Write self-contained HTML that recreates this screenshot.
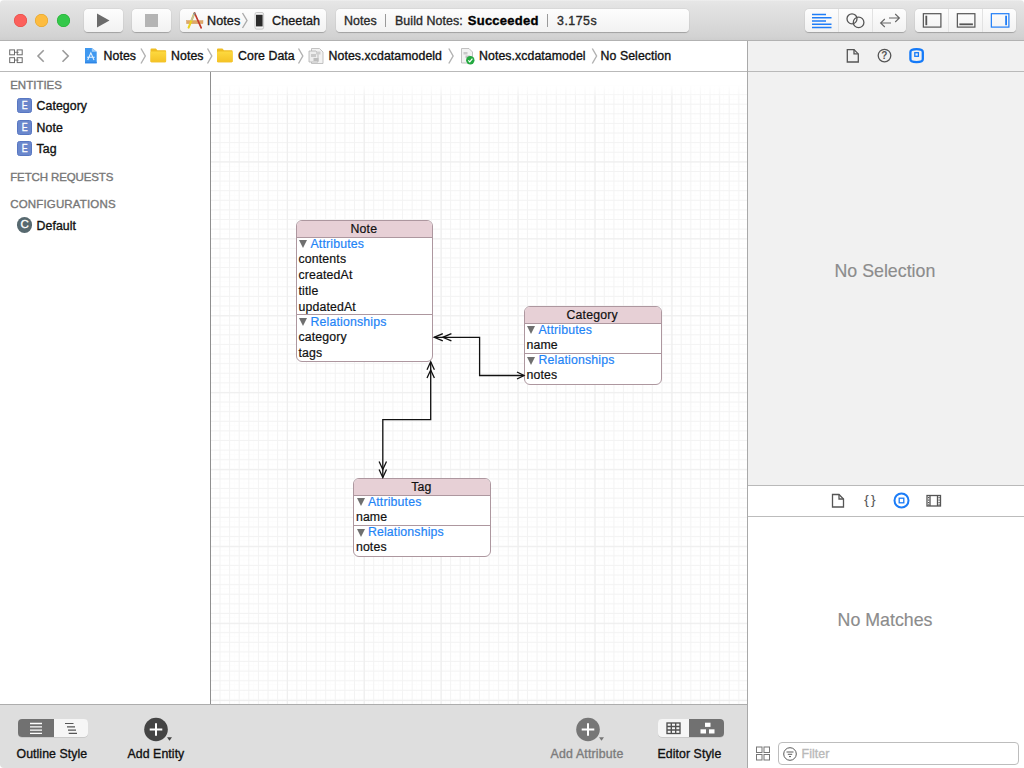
<!DOCTYPE html>
<html lang="en">
<head>
<meta charset="utf-8">
<title>Notes.xcdatamodel</title>
<style>
*{box-sizing:border-box;margin:0;padding:0}
html,body{width:1024px;height:768px;overflow:hidden;background:#fff}
body{font-family:"Liberation Sans",sans-serif;font-size:12.3px;color:#111;position:relative;-webkit-font-smoothing:antialiased;-webkit-text-stroke:0.35px}
.abs{position:absolute}
.t{position:absolute;white-space:nowrap;line-height:16px;height:16px;letter-spacing:0.08px}
/* window */
#win{position:absolute;left:0;top:0;width:1024px;height:768px;border-radius:4px;overflow:hidden;background:#fff}
#toolbar{position:absolute;left:0;top:0;width:1024px;height:41px;background:linear-gradient(#f0f0f0 0px,#e6e6e6 1.5px,#e3e3e3 6px,#d3d3d3 36px,#cecece 40px);border-bottom:1px solid #b2b2b2}
.tl{position:absolute;top:14px;width:13px;height:13px;border-radius:50%}
.btn{position:absolute;top:9px;height:23px;border-radius:4px;background:linear-gradient(#fdfdfd,#f2f2f2);box-shadow:0 0.5px 0.8px rgba(0,0,0,.22),0 0 0 0.5px rgba(0,0,0,.04)}
.sep{position:absolute;top:0;width:1px;height:23px;background:#e2e2e2}
#jump{position:absolute;left:0;top:41px;width:747px;height:30px;background:#fff}
.hline{position:absolute;height:1px;background:#b9b9b9}
.vline{position:absolute;width:1px;background:#b4b4b4}
.hdr{color:#777;font-size:11.5px;font-weight:400;letter-spacing:0;margin-top:-0.7px;margin-left:-0.3px}
.eicon{position:absolute;width:15px;height:15px;border-radius:2.5px;background:#6a87cc;border:1px solid #5877c2;color:#fff;font-size:11px;font-weight:400;text-align:center;line-height:13px;-webkit-text-stroke:0.4px #fff}
.eicon span{display:inline-block;transform:scaleX(.8)}
#canvas{position:absolute;left:211px;top:72px;width:536px;height:632px;background:#fff;overflow:hidden}
#grid{position:absolute;left:0;top:12px;width:536px;height:620px;
background-image:linear-gradient(to right,#eeeeee 1px,transparent 1px),linear-gradient(to bottom,#eeeeee 1px,transparent 1px),linear-gradient(to right,#f3f3f3 1px,transparent 1px),linear-gradient(to bottom,#f3f3f3 1px,transparent 1px),linear-gradient(to right,#fdfdfd 1px,transparent 1px),linear-gradient(to bottom,#fdfdfd 1px,transparent 1px);
background-size:76.96px 76.96px,76.96px 76.96px,9.62px 9.62px,9.62px 9.62px,4.81px 4.81px,4.81px 4.81px;background-position:75.84px 0.5px,75.84px 0.5px,8.5px 0.5px,8.5px 0.5px,8.5px 0.5px,8.5px 0.5px}
.ent{-webkit-text-stroke:0.2px;position:absolute;border:1px solid #ad979f;border-radius:6px;background:#fff;overflow:hidden}
.ent .h{position:absolute;left:0;top:0;right:0;height:17px;background:#e7d0d6;border-bottom:1px solid #ad979f}
.ent .d{position:absolute;left:0;right:0;height:1px;background:#ad979f}
.ent .r{margin-top:-1.1px;position:absolute;left:1.5px;white-space:nowrap;line-height:16px;height:16px;font-size:12.3px;letter-spacing:0.15px;color:#111}
.ent .s{margin-top:-1.1px;position:absolute;left:13.5px;white-space:nowrap;line-height:16px;height:16px;font-size:12.3px;letter-spacing:0.17px;color:#1f84f6}
.ent .c{margin-top:-1px;margin-left:-1.5px;position:absolute;left:0;right:0;text-align:center;white-space:nowrap;line-height:16px;height:16px;font-size:12.3px;letter-spacing:0.15px;color:#111}
.tri{margin-top:-1.9px;position:absolute;left:2.3px;width:0;height:0;border-left:4px solid transparent;border-right:4px solid transparent;border-top:8px solid #6f6f6f}
#bottombar{position:absolute;left:0;top:704px;width:747px;height:64px;background:#dedede;border-top:1px solid #adadad}
#insp{position:absolute;left:748px;top:41px;width:276px;height:444px;background:#f1f1f1}
#lib{position:absolute;left:748px;top:485px;width:276px;height:283px;background:#fff}
.big{-webkit-text-stroke:0.15px;position:absolute;white-space:nowrap;font-size:17.8px;color:#8c8c8c;line-height:22px;height:22px}
</style>
</head>
<body>
<div id="win">

<!-- ======= TOOLBAR ======= -->
<div id="toolbar">
  <div class="tl" style="left:14px;background:#fc605c;box-shadow:inset 0 0 0 0.5px #e0443e"></div>
  <div class="tl" style="left:35px;background:#fdbc40;box-shadow:inset 0 0 0 0.5px #dfa023"></div>
  <div class="tl" style="left:57px;background:#34c84a;box-shadow:inset 0 0 0 0.5px #1dad2b"></div>

  <div class="btn" style="left:84px;width:39px">
    <svg class="abs" style="left:0;top:0" width="39" height="23"><path d="M13 4.5 L25.5 11.5 L13 18.5 Z" fill="#6b6b6b"/></svg>
  </div>
  <div class="btn" style="left:132px;width:39px">
    <div class="abs" style="left:13px;top:5px;width:13px;height:13px;background:#b4b4b4"></div>
  </div>

  <div class="btn" style="left:180px;width:146px">
    <svg class="abs" style="left:5px;top:2px" width="20" height="20" viewBox="0 0 20 20">
      <rect x="1.5" y="9.5" width="16.5" height="3.2" fill="#dfa868" stroke="#cf9a5c" stroke-width="0.4"/>
      <path d="M9.3 2.5 L3.6 16.6" stroke="#ead21f" stroke-width="2.1" stroke-linecap="round"/>
      <path d="M9.3 2.5 L6.4 9.6" stroke="#b9b9b9" stroke-width="1.4"/>
      <path d="M9.6 2 L16.2 16.8" stroke="#c0392b" stroke-width="1.7" stroke-linecap="round"/>
      <circle cx="9.5" cy="2.6" r="1.2" fill="#8d8d8d"/>
    </svg>
    <span class="t" style="left:27px;top:3.5px;font-size:12.6px;color:#1a1a1a">Notes</span>
    <svg class="abs" style="left:61px;top:3px" width="8" height="17"><path d="M1.5 1 L6 8.5 L1.5 16" fill="none" stroke="#ababab" stroke-width="1.4"/></svg>
    <svg class="abs" style="left:74px;top:2.5px" width="11" height="18">
      <rect x="1" y="0.5" width="8.6" height="16.6" rx="1.6" fill="#f3f3f3" stroke="#bdbdbd" stroke-width="0.8"/>
      <rect x="2" y="2.8" width="6.6" height="11.6" fill="#2b2b2b"/>
    </svg>
    <span class="t" style="left:92px;top:3.5px;font-size:12.6px;color:#1a1a1a">Cheetah</span>
  </div>

  <div class="btn" style="left:336px;width:353px">
    <span class="t" style="left:8px;top:3.5px;font-size:12.4px;color:#2a2a2a">Notes</span>
    <div class="abs" style="left:49px;top:5px;width:1px;height:13px;background:#9a9a9a"></div>
    <span class="t" style="left:59px;top:3.5px;font-size:12.4px;color:#2a2a2a">Build Notes:<b style="color:#000;font-size:13px;letter-spacing:0.25px;margin-left:5px">Succeeded</b></span>
    <div class="abs" style="left:211px;top:5px;width:1px;height:13px;background:#9a9a9a"></div>
    <span class="t" style="left:221px;top:3.5px;font-size:12.4px;letter-spacing:0.5px;color:#2a2a2a">3.175s</span>
  </div>

  <!-- editor segmented -->
  <div class="btn" style="left:805px;width:101px">
    <div class="sep" style="left:33px"></div><div class="sep" style="left:67px"></div>
    <svg class="abs" style="left:0;top:0" width="101" height="23">
      <g stroke="#1f7df7" stroke-width="1.5">
        <path d="M7 5.5H21M7 8.75H26.5M7 12H21M7 15.25H26.5M7 18.5H26.5"/>
      </g>
      <g fill="none" stroke="#555" stroke-width="1.3">
        <circle cx="47" cy="9.8" r="5"/><circle cx="53.6" cy="13.4" r="5.3"/>
        <path d="M84 9H94.2M90.2 5L94.4 9L90.2 13" stroke-width="1.1" stroke="#666"/>
        <path d="M86 14H75.8M79.8 10L75.6 14L79.8 18" stroke-width="1.1" stroke="#666"/>
      </g>
    </svg>
  </div>
  <!-- panel segmented -->
  <div class="btn" style="left:914.5px;width:101px">
    <div class="sep" style="left:33.5px"></div><div class="sep" style="left:67.5px"></div>
    <svg class="abs" style="left:0;top:0" width="101" height="23">
      <g fill="none" stroke="#555" stroke-width="1.2">
        <rect x="8.35" y="4.7" width="17.55" height="13.4"/><rect x="42.35" y="4.7" width="17.55" height="13.4"/>
      </g>
      <rect x="10.4" y="6.7" width="1.8" height="9.5" fill="#555"/>
      <rect x="44.4" y="14.4" width="13.5" height="1.8" fill="#555"/>
      <rect x="76.35" y="4.7" width="17.55" height="13.4" fill="none" stroke="#1f7df7" stroke-width="1.2"/>
      <rect x="90.2" y="6.7" width="1.8" height="9.5" fill="#1f7df7"/>
    </svg>
  </div>
</div>

<!-- ======= JUMP BAR ======= -->
<div id="jump">
  <svg class="abs" style="left:0;top:0" width="747" height="30">
    <!-- related items grid -->
    <g fill="none" stroke="#6a6a6a" stroke-width="1">
      <rect x="9.7" y="8.9" width="4.8" height="4.9"/><rect x="17.2" y="8.9" width="5" height="4.9"/>
      <rect x="9.7" y="16.7" width="4.8" height="4.9"/><rect x="17.2" y="16.7" width="5" height="4.9"/>
      <path d="M14.5 11.3H18.6M14.5 19.1H18.6" stroke-width="0.9"/>
    </g>
    <path d="M43.7 9.3L38 15L43.7 20.7" fill="none" stroke="#9a9a9a" stroke-width="1.6"/>
    <path d="M62.5 9.3L68.2 15L62.5 20.7" fill="none" stroke="#9a9a9a" stroke-width="1.6"/>
    <!-- project icon -->
    <path d="M85 7H91.8L96.7 10.8V22.3H85Z" fill="#3f98f0"/>
    <path d="M91.8 7V10.8H96.7Z" fill="#a5d0fa"/>
    <rect x="85" y="20.8" width="11.7" height="1.5" fill="#2f86e6"/>
    <path d="M87.7 19L90.850 11.8L94 19M87 16.2H94.7" fill="none" stroke="#e3f1ff" stroke-width="1.1"/>
    <!-- chevrons -->
    <g fill="none" stroke="#b2b2b2" stroke-width="1.4">
      <path d="M141 7.5L145.3 15L141 22.5"/>
      <path d="M207.5 7.5L211.8 15L207.5 22.5"/>
      <path d="M298.5 7.5L302.8 15L298.5 22.5"/>
      <path d="M448.8 7.5L453.1 15L448.8 22.5"/>
      <path d="M592.3 7.5L596.6 15L592.3 22.5"/>
    </g>
    <!-- folders -->
    <defs><linearGradient id="fg" x1="0" y1="0" x2="0" y2="1"><stop offset="0" stop-color="#fdd93f"/><stop offset="1" stop-color="#f4c225"/></linearGradient></defs>
    <g>
      <path d="M150.5 8.6a1 1 0 0 1 1-1h4.4l1.5 1.7h7.7a1 1 0 0 1 1 1V20.2a1 1 0 0 1-1 1h-13.6a1 1 0 0 1-1-1Z" fill="#efbd22"/>
      <rect x="150.5" y="10.6" width="15.6" height="10.6" rx="1" fill="url(#fg)"/>
      <path d="M217 8.6a1 1 0 0 1 1-1h4.4l1.5 1.7h7.7a1 1 0 0 1 1 1V20.2a1 1 0 0 1-1 1h-13.6a1 1 0 0 1-1-1Z" fill="#efbd22"/>
      <rect x="217" y="10.6" width="15.6" height="10.6" rx="1" fill="url(#fg)"/>
    </g>
    <!-- xcdatamodeld icon -->
    <g>
      <path d="M311.5 7.5H319.5L323 11V22.5H311.5Z" fill="#f2f2f2" stroke="#b5b5b5" stroke-width="0.8"/>
      <path d="M309 10H316L318 12V21H309Z" fill="#ededed" stroke="#b0b0b0" stroke-width="0.8"/>
      <rect x="311" y="13" width="5" height="3" fill="#c9c9c9"/><rect x="313.5" y="17" width="5" height="3" fill="#bdbdbd"/>
      <rect x="316" y="10.5" width="4.5" height="3" fill="#cfcfcf"/>
    </g>
    <!-- xcdatamodel icon -->
    <g>
      <path d="M461.5 7.5H469L472.5 11V22H461.5Z" fill="#f2f2f2" stroke="#b3b3b3" stroke-width="0.8"/>
      <rect x="463.5" y="11" width="4" height="2.5" fill="#c8c8c8"/><rect x="465.5" y="14.5" width="4.5" height="2.5" fill="#c2c2c2"/>
      <circle cx="470.3" cy="19.3" r="4.2" fill="#23a940"/>
      <path d="M468.3 19.3L469.8 20.9L472.4 17.7" fill="none" stroke="#fff" stroke-width="1.2"/>
    </g>
  </svg>
  <span class="t" style="left:103.5px;top:7px">Notes</span>
  <span class="t" style="left:171px;top:7px">Notes</span>
  <span class="t" style="left:238px;top:7px">Core Data</span>
  <span class="t" style="left:328.5px;top:7px">Notes.xcdatamodeld</span>
  <span class="t" style="left:479px;top:7px">Notes.xcdatamodel</span>
  <span class="t" style="left:600.5px;top:7px">No Selection</span>
</div>
<div class="hline" style="left:0;top:71px;width:1024px"></div>

<!-- ======= SIDEBAR ======= -->
<div id="side" class="abs" style="left:0;top:72px;width:210px;height:632px;background:#fff">
  <span class="t hdr" style="left:10.5px;top:6px">ENTITIES</span>
  <div class="eicon" style="left:17px;top:26px"><span>E</span></div>
  <span class="t" style="left:36.5px;top:26px">Category</span>
  <div class="eicon" style="left:17px;top:47.5px"><span>E</span></div>
  <span class="t" style="left:36.5px;top:47.5px">Note</span>
  <div class="eicon" style="left:17px;top:69px"><span>E</span></div>
  <span class="t" style="left:36.5px;top:69px">Tag</span>
  <span class="t hdr" style="left:10.5px;top:97.5px;letter-spacing:-0.12px">FETCH REQUESTS</span>
  <span class="t hdr" style="left:10.5px;top:125px;letter-spacing:0.16px">CONFIGURATIONS</span>
  <div class="abs" style="left:16.8px;top:145.2px;width:15.5px;height:15.5px;border-radius:50%;background:#57696f;color:#fff;font-size:11.5px;font-weight:400;text-align:center;line-height:15.5px;-webkit-text-stroke:0.3px #fff">C</div>
  <span class="t" style="left:36.5px;top:145.5px">Default</span>
</div>
<div class="vline" style="left:210px;top:72px;height:632px;background:#8f8f8f"></div>

<!-- ======= CANVAS ======= -->
<div id="canvas">
  <div id="grid"></div>
  <div class="abs" style="left:0;top:8px;width:536px;height:18px;background:linear-gradient(rgba(255,255,255,1) 25%,rgba(255,255,255,0))"></div>
</div>

<!-- entities (page coordinates) -->
<div class="ent" style="left:296px;top:220px;width:137.2px;height:142px">
  <div class="h"></div><span class="c" style="top:0.5px">Note</span>
  <div class="tri" style="top:20.5px"></div><span class="s" style="top:16.1px">Attributes</span>
  <span class="r" style="top:31px">contents</span>
  <span class="r" style="top:46.7px">createdAt</span>
  <span class="r" style="top:62.9px">title</span>
  <span class="r" style="top:79px">updatedAt</span>
  <div class="d" style="top:93px"></div>
  <div class="tri" style="top:98.5px"></div><span class="s" style="top:93.8px">Relationships</span>
  <span class="r" style="top:109px">category</span>
  <span class="r" style="top:125px">tags</span>
</div>

<div class="ent" style="left:524px;top:306px;width:137.8px;height:78.8px">
  <div class="h"></div><span class="c" style="top:0.5px">Category</span>
  <div class="tri" style="top:20.5px"></div><span class="s" style="top:15.7px">Attributes</span>
  <span class="r" style="top:30.7px">name</span>
  <div class="d" style="top:46px"></div>
  <div class="tri" style="top:51.4px"></div><span class="s" style="top:46.2px">Relationships</span>
  <span class="r" style="top:61.3px">notes</span>
</div>

<div class="ent" style="left:353.4px;top:478px;width:137.6px;height:78.7px">
  <div class="h"></div><span class="c" style="top:0.5px">Tag</span>
  <div class="tri" style="top:20.5px"></div><span class="s" style="top:15.7px">Attributes</span>
  <span class="r" style="top:30.7px">name</span>
  <div class="d" style="top:46px"></div>
  <div class="tri" style="top:51.4px"></div><span class="s" style="top:46.2px">Relationships</span>
  <span class="r" style="top:61.3px">notes</span>
</div>

<!-- connectors -->
<svg class="abs" style="left:0;top:0;pointer-events:none" width="1024" height="768">
  <g fill="none" stroke="#111" stroke-width="1.3" stroke-linejoin="miter">
    <path d="M434 337.3H479.6V375.5H523.8"/>
    <path d="M442.8 333.7L434.2 337.3L442.8 340.9"/>
    <path d="M451.4 333.7L442.8 337.3L451.4 340.9"/>
    <path d="M517 372L524 375.5L517 379"/>
    <path d="M430.7 362V419.6H382.8V477.5"/>
    <path d="M427 369.8L430.7 361.8L434.4 369.8"/>
    <path d="M427 378L430.7 370L434.4 378"/>
    <path d="M379.1 461.5L382.8 469.5L386.5 461.5"/>
    <path d="M379.1 469.5L382.8 477.5L386.5 469.5"/>
  </g>
</svg>

<!-- ======= BOTTOM BAR ======= -->
<div id="bottombar">
  <!-- outline style seg -->
  <div class="abs" style="left:18px;top:13.6px;width:70px;height:18px;border-radius:4px;background:#f6f6f6;box-shadow:0 0.5px 0.5px rgba(0,0,0,.18);overflow:hidden">
    <div class="abs" style="left:0;top:0;width:36px;height:19px;background:#717171"></div>
    <svg class="abs" style="left:0;top:0" width="70" height="19">
      <path d="M12 4.5H24M12 7.8H24M12 11.1H24M12 14.4H24" stroke="#fff" stroke-width="1.3"/>
      <path d="M47 4.5H55.5M49 7.8H57M50 11.1H58M50.7 14.4H59" stroke="#555" stroke-width="1.2"/>
    </svg>
  </div>
  <span class="t" style="left:16.5px;top:40.5px">Outline Style</span>

  <svg class="abs" style="left:140px;top:10px" width="40" height="30">
    <circle cx="16" cy="14.5" r="11.8" fill="#444"/>
    <path d="M16 8.2V20.8M9.7 14.5H22.3" stroke="#fff" stroke-width="2"/>
    <path d="M27 22.2H32L29.5 25.7Z" fill="#444"/>
  </svg>
  <span class="t" style="left:127.5px;top:40.5px">Add Entity</span>

  <svg class="abs" style="left:571.5px;top:10px" width="40" height="30">
    <circle cx="16" cy="14.5" r="11.8" fill="#767676"/>
    <path d="M16 8.2V20.8M9.7 14.5H22.3" stroke="#fff" stroke-width="2"/>
    <path d="M27 22.2H32L29.5 25.7Z" fill="#767676"/>
  </svg>
  <span class="t" style="left:550.5px;top:40.5px;color:#7c7c7c;letter-spacing:0.2px">Add Attribute</span>

  <div class="abs" style="left:657.5px;top:13.6px;width:66.5px;height:18px;border-radius:4px;background:#f6f6f6;box-shadow:0 0.5px 0.5px rgba(0,0,0,.18);overflow:hidden">
    <div class="abs" style="left:31.5px;top:0;width:36px;height:19px;background:#717171"></div>
    <svg class="abs" style="left:0;top:0" width="67" height="19">
      <g fill="none" stroke="#505050" stroke-width="1.35">
        <rect x="9" y="4" width="13" height="10.5"/>
        <path d="M9 7.5H22M9 11H22M13.3 4V14.5M17.7 4V14.5"/>
      </g>
      <rect x="47" y="3.7" width="5.5" height="4.2" fill="#fff"/>
      <rect x="42.5" y="10.3" width="5.5" height="4.2" fill="#fff"/>
      <rect x="51" y="10.3" width="5.5" height="4.2" fill="#fff"/>
    </svg>
  </div>
  <span class="t" style="left:657.5px;top:40.5px">Editor Style</span>
</div>

<!-- ======= RIGHT PANEL ======= -->
<div class="vline" style="left:747px;top:41px;height:727px;background:#a9a9a9"></div>
<div id="insp">
  <svg class="abs" style="left:0;top:0" width="276" height="30">
    <g fill="none" stroke="#555" stroke-width="1.3">
      <path d="M99.3 8.6H106L110.3 12.9V21H99.3Z"/><path d="M106 8.6V12.9H110.3"/>
      <circle cx="136.5" cy="14.6" r="6.3"/>
    </g>
    <path d="M162.4 11C162.4 7.2 174.8 7.2 174.8 11V18.2C174.8 22 162.4 22 162.4 18.2Z" fill="none" stroke="#157af8" stroke-width="2.3" stroke-linejoin="round"/>
    <rect x="166.8" y="11.7" width="3.6" height="3.6" fill="none" stroke="#157af8" stroke-width="1.3"/>
  </svg>
  <span class="abs" style="left:133.3px;top:8.3px;font-size:10px;font-weight:700;color:#555;line-height:13px;-webkit-text-stroke:0">?</span>
  <span class="big" style="left:86.5px;top:219.4px">No Selection</span>
</div>
<div class="hline" style="left:748px;top:71px;width:276px;background:#b9b9b9"></div>

<div id="lib">
  <div class="hline" style="left:0;top:0;width:276px;background:#b9b9b9"></div>
  <div class="hline" style="left:0;top:31px;width:276px;background:#bcbcbc"></div>
  <svg class="abs" style="left:0;top:0" width="276" height="32">
    <g fill="none" stroke="#555" stroke-width="1.3">
      <path d="M84.5 9.5H91L95.5 14V22H84.5Z"/><path d="M91 9.5V14H95.5"/>
      <rect x="179" y="10.5" width="13.5" height="10.5"/>
      <path d="M182 10.5V21M189.5 10.5V21"/>
    </g>
    <g fill="#555">
      <rect x="180" y="12" width="1.2" height="1.2"/><rect x="180" y="14.5" width="1.2" height="1.2"/><rect x="180" y="17" width="1.2" height="1.2"/><rect x="180" y="19.3" width="1.2" height="1.2"/>
      <rect x="190.5" y="12" width="1.2" height="1.2"/><rect x="190.5" y="14.5" width="1.2" height="1.2"/><rect x="190.5" y="17" width="1.2" height="1.2"/><rect x="190.5" y="19.3" width="1.2" height="1.2"/>
    </g>
    <circle cx="153.5" cy="15.5" r="7" fill="none" stroke="#1b7cf7" stroke-width="2"/>
    <rect x="151.2" y="13.2" width="4.6" height="4.6" fill="none" stroke="#1b7cf7" stroke-width="1.3"/>
  </svg>
  <span class="abs" style="left:115px;top:7px;font-size:13px;color:#555;line-height:16px;letter-spacing:2.2px;font-size:13.5px;margin-left:1.3px;-webkit-text-stroke:0.1px">{}</span>
  <span class="big" style="left:89.6px;top:123.9px">No Matches</span>

  <svg class="abs" style="left:0;top:255px" width="40" height="28">
    <g fill="none" stroke="#777" stroke-width="1">
      <rect x="8.5" y="7" width="5.5" height="5.5"/><rect x="16" y="7" width="5.5" height="5.5"/>
      <rect x="8.5" y="14.5" width="5.5" height="5.5"/><rect x="16" y="14.5" width="5.5" height="5.5"/>
    </g>
  </svg>
  <div class="abs" style="left:30px;top:257px;width:241px;height:22.5px;border:1px solid #bdbdbd;border-radius:4px;background:#fff">
    <svg class="abs" style="left:4px;top:3.5px" width="15" height="15">
      <circle cx="7" cy="7" r="6.3" fill="none" stroke="#5a5a5a" stroke-width="1"/>
      <path d="M3.5 5H10.5M4.8 7.3H9.2M6 9.6H8" stroke="#5a5a5a" stroke-width="1"/>
    </svg>
    <span class="t" style="left:22.5px;top:2.5px;color:#b9b9b9;font-size:12.4px">Filter</span>
  </div>
</div>

</div>
</body>
</html>
